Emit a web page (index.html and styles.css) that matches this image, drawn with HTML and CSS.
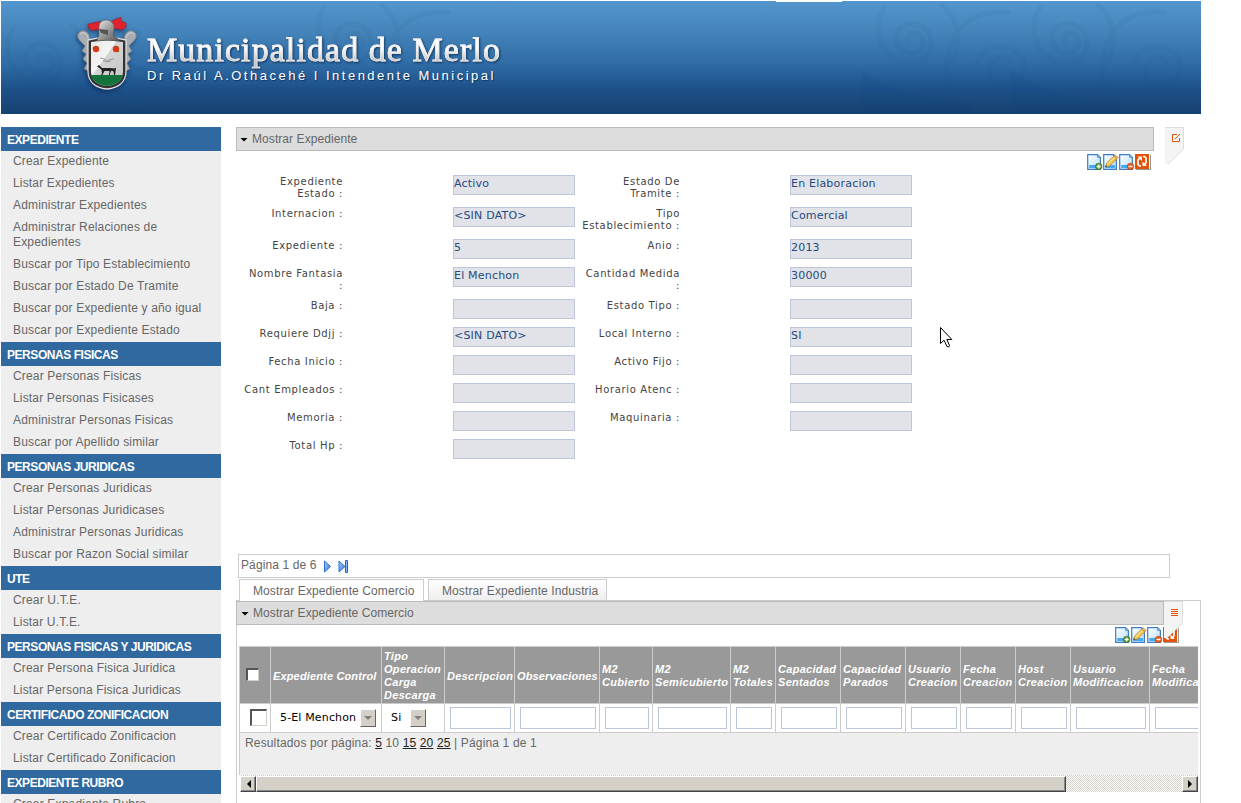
FILE: index.html
```
<!DOCTYPE html>
<html lang="es">
<head>
<meta charset="utf-8">
<title>Municipalidad de Merlo</title>
<link rel="stylesheet" href="styles.css">
</head>
<body>
<svg class="defs" width="0" height="0">
  <defs>
    <linearGradient id="page" x1="0" y1="0" x2="1" y2="1"><stop offset="0" stop-color="#fff"/><stop offset="1" stop-color="#b9dcf8"/></linearGradient>
    <linearGradient id="metal" x1="0" y1="0" x2="1" y2="1"><stop offset="0" stop-color="#eee"/><stop offset=".5" stop-color="#999"/><stop offset="1" stop-color="#555"/></linearGradient>
    <linearGradient id="shield" x1="0" y1="0" x2="1" y2="1"><stop offset="0" stop-color="#e8e8e8"/><stop offset=".4" stop-color="#f4f4f4"/><stop offset=".41" stop-color="#d4d4d4"/><stop offset="1" stop-color="#c4c4c4"/></linearGradient>
    <linearGradient id="play" x1="0" y1="0" x2="1" y2="1"><stop offset="0" stop-color="#a9d0ff"/><stop offset="1" stop-color="#2f74dc"/></linearGradient>
    <symbol id="doc" viewBox="0 0 16 16">
      <path d="M.7 .7h9.800L13.400 3.600V15.300H.7z" fill="url(#page)" stroke="#3c7cc4" stroke-width="1.200"/>
      <path d="M10.500 .6v3h3z" fill="#8dbdeb" stroke="#3c7cc4" stroke-width=".6"/>
      <path d="M2.200 11h9.800v3H2.200z" fill="#49a9ee"/>
    </symbol>
    <symbol id="add" viewBox="0 0 16 16"><use href="#doc"/><circle cx="11.700" cy="12.500" r="3.300" fill="#4f9433" stroke="#356b23" stroke-width=".6"/><path d="M11.700 10.500v4M9.700 12.500h4" stroke="#fff" stroke-width="1.300"/></symbol>
    <symbol id="edit" viewBox="0 0 16 16"><use href="#doc"/><path d="M2.500 13l1.200-4L10.800 2l3.200 2.800L6.500 12z" fill="#f5c84c" stroke="#a77a25" stroke-width=".7"/><path d="M4.700 10l7-7" stroke="#fff0a8"/><path d="M10.800 2l1.500-1.300 3.100 2.700-1.400 1.400z" fill="#e8b088" stroke="#a77a25" stroke-width=".5"/><path d="M2.500 13l.5-1.700 1.300 1z" fill="#333"/></symbol>
    <symbol id="del" viewBox="0 0 16 16"><use href="#doc"/><circle cx="11.500" cy="12.500" r="3.300" fill="#e8601c" stroke="#a73b0a" stroke-width=".6"/><path d="M9.500 12.500h4" stroke="#fff" stroke-width="1.400"/></symbol>
    <symbol id="sync" viewBox="0 0 16 16"><path d="M1 15.500h14.500V1" fill="none" stroke="#999"/><path d="M0 0h14v15H0z" fill="#e35205"/><path d="M6 12H4.500L3 10.500V6l2-2M8 2.500h1.500L11 4v4.500l-1.500 2" fill="none" stroke="#fff" stroke-width="1.700"/><path d="M2.500 2.500H7V7zM7.500 7.500V12H12z" fill="#fff"/></symbol>
  </defs>
</svg>

<header class="banner">
  <svg class="swirls" width="1200" height="113" fill="none" stroke="#1d527f">
    <g id="curl" stroke-opacity=".07" stroke-width="5">
      <path d="M908 42c-5-9 8-14 13-5 5 11-9 20-20 12-14-11-3-30 15-26 20 6 18 36-3 39-32 4-46-36-28-58M940 3c22 18 18 45 10 60M1010 12c-54-8-74 38-60 82M1010 63c-5-12-22-7-22 8 1 19 32 18 35-3 3-25-39-32-47-5"/>
    </g>
    <use href="#curl" x="156"/>
    <use href="#curl" x="-560"/>
    <use href="#curl" x="-870" y="20"/>
    <path d="M860 68q35 30 110 34v10H860zM1010 68q35 30 110 34v10h-110z" fill="#0c467d" fill-opacity=".08" stroke="none"/>
  </svg>
  <span class="notch"></span>
  <svg class="crest" width="64" height="78" viewBox="0 0 64 78">
    <g fill="#a9adb2" stroke="#777c82" stroke-width=".8">
      <path d="M14 22C13 12 4 12 2 17c-2 5 5 9 7 12l-3 5 4 3-3 5 4 4-3 6 5 2z"/>
      <path d="M48 22c1-10 10-10 12-5 2 5-5 9-7 12l3 5-4 3 3 5-4 4 3 6-5 2z"/>
      <path d="M4 17c4-3 7 0 8 4M58 17c-4-3-7 0-8 4" stroke="#ddd" fill="none"/>
    </g>
    <path d="M12 23q19-5 38 0v31c0 12-9 17-19 18-10-1-19-6-19-18z" fill="#333" stroke="#ddd" stroke-width="1.300"/>
    <path d="M15 25q16-3 32 0v29c0 10-7 14-16 15-9-1-16-5-16-15z" fill="url(#shield)"/>
    <path d="M15 58h32c-2 7-8 10-16 11-8-1-14-4-16-11z" fill="#13733b"/>
    <g fill="#dc3719"><circle cx="20" cy="32" r="3.200"/><circle cx="40" cy="32" r="3.200"/></g>
    <path d="M16.500 31h2M41 34.500h2M20 29v1.500M40 29v1.500" stroke="#3f792c"/>
    <path d="M24 41q4 0 7 3 3-2 7-2M27 43.500l4 1.500 4-1" fill="none" stroke="#888" stroke-width=".8"/>
    <path d="M21 49.500l2-1.500 3 3h8.500l4 .5 1.500-1-.5 4.500-.5 3h-1l-.5-3.500-2-1-1.500 3v1.500h-1l.5-4h-5l-2 4h-1.500l1-1.500-.5-3.500-2-2z" fill="#222"/>
    <path d="M29 7c-6-5-10 0-17 0 0 5 3 7 6 6 5 0 7 0 11-3zM34 6c4-4 8-4 11-6-1 4 2 5 5 6 1 5-3 8-7 6-4 0-7-1-9-3z" fill="#dc2430" stroke="#a51421" stroke-width=".6"/>
    <path d="M23 19V9q1-6 8-6 7 1 7 8l-1 8q6 2 6 5-12-2-22 0 0-3 2-5z" fill="url(#metal)" stroke="#666" stroke-width=".6"/>
    <path d="M23 12l9 1v5l-7-2z" fill="#555"/>
  </svg>
  <div class="brand">
    <div class="brand-name">Municipalidad de Merlo</div>
    <div class="brand-sub">Dr Raúl A.Othacehé I Intendente Municipal</div>
  </div>
</header>

<div class="layout">
  <nav class="menu">
    <h3>EXPEDIENTE</h3>
    <a>Crear Expediente</a><a>Listar Expedientes</a><a>Administrar Expedientes</a><a>Administrar Relaciones de<br>Expedientes</a><a>Buscar por Tipo Establecimiento</a><a>Buscar por Estado De Tramite</a><a>Buscar por Expediente y año igual</a><a>Buscar por Expediente Estado</a>
    <h3>PERSONAS FISICAS</h3>
    <a>Crear Personas Fisicas</a><a>Listar Personas Fisicases</a><a>Administrar Personas Fisicas</a><a>Buscar por Apellido similar</a>
    <h3>PERSONAS JURIDICAS</h3>
    <a>Crear Personas Juridicas</a><a>Listar Personas Juridicases</a><a>Administrar Personas Juridicas</a><a>Buscar por Razon Social similar</a>
    <h3>UTE</h3>
    <a>Crear U.T.E.</a><a>Listar U.T.E.</a>
    <h3>PERSONAS FISICAS Y JURIDICAS</h3>
    <a>Crear Persona Fisica Juridica</a><a>Listar Persona Fisica Juridicas</a>
    <h3>CERTIFICADO ZONIFICACION</h3>
    <a>Crear Certificado Zonificacion</a><a>Listar Certificado Zonificacion</a>
    <h3>EXPEDIENTE RUBRO</h3>
    <a>Crear Expediente Rubro</a>
  </nav>

  <main class="main">
    <div class="title-row">
      <div class="title-bar"><i class="caret"></i>Mostrar Expediente</div>
      <svg class="tag" width="19" height="37"><path d="M0 0h19v22L3 37H0z" fill="#f4f4f4"/><path d="M0 .5h18.500v21.500L3 37" fill="none" stroke="#ddd"/><path d="M12 7.500H7.500v7h7V11M10 12l5-5" fill="none" stroke="#e35205"/></svg>
    </div>
    <div class="tools tools-top"><svg><use href="#add"/></svg><svg><use href="#edit"/></svg><svg><use href="#del"/></svg><svg><use href="#sync"/></svg></div>

    <div class="form">
      <label>Expediente<br>Estado :</label><output>Activo</output><label>Estado De<br>Tramite :</label><output>En Elaboracion</output>
      <label>Internacion :</label><output>&lt;SIN DATO&gt;</output><label>Tipo<br>Establecimiento :</label><output>Comercial</output>
      <label>Expediente :</label><output>5</output><label>Anio :</label><output>2013</output>
      <label>Nombre Fantasia<br>:</label><output>El Menchon</output><label>Cantidad Medida<br>:</label><output>30000</output>
      <label>Baja :</label><output></output><label>Estado Tipo :</label><output></output>
      <label>Requiere Ddjj :</label><output>&lt;SIN DATO&gt;</output><label>Local Interno :</label><output>SI</output>
      <label>Fecha Inicio :</label><output></output><label>Activo Fijo :</label><output></output>
      <label>Cant Empleados :</label><output></output><label>Horario Atenc :</label><output></output>
      <label>Memoria :</label><output></output><label>Maquinaria :</label><output></output>
      <label>Total Hp :</label><output></output>
    </div>

    <div class="pager"><span>Página 1 de 6</span>
      <svg width="9" height="13"><path d="M1.500 1l6 5.500-6 5.500z" fill="url(#play)" stroke="#2d6fd3"/></svg>
      <svg width="11" height="13"><path d="M1 1l6 5.500L1 12z" fill="url(#play)" stroke="#2d6fd3"/><path d="M7.500 .5h2v12h-2z" fill="#8fbdf6" stroke="#1f60ce"/></svg>
    </div>
    <div class="tabs"><div class="tab active">Mostrar Expediente Comercio</div><div class="tab">Mostrar Expediente Industria</div></div>

    <section class="panel">
      <div class="title-bar sub"><i class="caret"></i>Mostrar Expediente Comercio</div>
      <div class="tools tools-sub"><svg><use href="#add"/></svg><svg><use href="#edit"/></svg><svg><use href="#del"/></svg><svg><use href="#sync"/></svg></div>
      <svg class="tag over" width="19" height="37"><path d="M0 0h19v22L3 37H0z" fill="#f4f4f4"/><path d="M0 .5h18.500v21.500L3 37" fill="none" stroke="#ddd"/><path d="M7 8.500h7M7 10.500h7M7 12.500h7M7 14.500h7" stroke="#e35205"/></svg>
      <div class="grid-wrap">
        <div class="grid head">
          <div><b class="check small"></b></div><div>Expediente Control</div><div>Tipo<br>Operacion<br>Carga<br>Descarga</div><div>Descripcion</div><div class="tight">Observaciones</div><div>M2<br>Cubierto</div><div>M2<br>Semicubierto</div><div>M2<br>Totales</div><div>Capacidad<br>Sentados</div><div>Capacidad<br>Parados</div><div>Usuario<br>Creacion</div><div>Fecha<br>Creacion</div><div>Host<br>Creacion</div><div>Usuario<br>Modificacion</div><div>Fecha<br>Modificacion</div>
        </div>
        <div class="grid row">
          <div><b class="check"></b></div><div class="pick">5-El Menchon<i class="drop"></i></div><div class="pick">Si<i class="drop"></i></div><div><input></div><div><input></div><div><input></div><div><input></div><div><input></div><div><input></div><div><input></div><div><input></div><div><input></div><div><input></div><div><input></div><div><input></div>
        </div>
        <div class="results">Resultados por página: <u>5</u> 10 <u>15</u> <u>20</u> <u>25</u> | Página 1 de 1</div>
        <div class="scroll"><i class="btn"><svg width="5" height="8"><path d="M5 0v8L1 4z"/></svg></i><i class="thumb"></i><i class="btn end"><svg width="5" height="8"><path d="M0 0v8l4-4z"/></svg></i></div>
      </div>
    </section>
  </main>
</div>
<svg class="cursor" width="13" height="22"><path d="M.5 .5v16l3.500-3.300 3 6.300q2 1.500 2.500-1l-2.700-6h5z" fill="#fff" stroke="#000"/></svg>
</body>
</html>
```
FILE: styles.css
```
* { box-sizing: border-box; }
body {
  margin: 0;
  padding: 1px 0 0 1px;
  width: 1241px;
  height: 803px;
  overflow: hidden;
  position: relative;
  background: #fff;
  color: #666;
  font: 12px/15px "Liberation Sans", Arial, sans-serif;
}
svg { display: block; flex: none; }
i { font-style: normal; }
.defs { position: absolute; }

.banner {
  position: relative;
  width: 1200px;
  height: 113px;
  display: flex;
  padding-left: 75px;
  background: linear-gradient(#5396cd, #4282b8 30%, #2f6ba5 56%, #1d5089 78%, #15416f);
}
.swirls { position: absolute; left: 0; top: 0; }
.notch { position: absolute; left: 775px; top: -1px; width: 66px; height: 2px; background: #fff; }
.crest { position: relative; margin-top: 16px; filter: drop-shadow(-1px 2px 2px rgba(0,20,60,.5)); }
.brand { position: relative; padding: 31px 0 0 7px; white-space: nowrap; }
.brand-name {
  font: 34px/36px "Liberation Serif", serif;
  letter-spacing: 1.07px;
  background: linear-gradient(#fff 45%, #c4c4c4 80%);
  -webkit-background-clip: text;
  background-clip: text;
  color: transparent;
  -webkit-text-stroke: .8px rgba(235,235,235,.85);
  filter: drop-shadow(1px 1px 1px rgba(0,20,50,.6));
}
.brand-sub { color: #fff; font-size: 13px; line-height: 16px; letter-spacing: 2.5px; text-shadow: 1px 1px 1px rgba(0,20,50,.5); }

.layout { display: flex; margin-top: 13px; }
.menu { width: 220px; height: 676px; overflow: hidden; background: #eee; flex: none; }
.menu h3 { margin: 0; height: 24px; padding: 1px 0 0 6px; background: #30699f; color: #fff; font-size: 12px; line-height: 24px; letter-spacing: -.45px; white-space: nowrap; }
.menu a { display: block; padding: 3px 0 4px 12px; letter-spacing: .17px; white-space: nowrap; }

.main { width: 965px; margin-left: 14px; padding-left: 1px; }
.title-row { display: flex; height: 26px; gap: 11px; }
.title-bar { width: 918px; height: 24px; display: flex; align-items: center; gap: 4px; padding: 1px 0 0 3px; background: #ddd; border: 1px solid #bbb; letter-spacing: .07px; }
.caret { width: 8px; height: 4px; background: #000; clip-path: polygon(0 0, 100% 0, 50% 100%); }
.tools { display: flex; height: 16px; }
.tools svg { width: 16px; height: 16px; }
.tools-top { margin: 1px 0 0 851px; }

.form {
  display: grid;
  grid-template-columns: 107px 232px 105px 232px;
  justify-content: start;
  padding-top: 5px;
  height: 384px;
  align-content: start;
}
.form label { text-align: right; font: 10px/12px "DejaVu Sans", Verdana, sans-serif; color: #444; letter-spacing: .65px; padding: 1px 0 7px; white-space: nowrap; }
.form output { width: 122px; height: 20px; margin: 0 0 8px 110px; border: 1px solid #bcc5dc; background: #e2e3e8; color: #234a82; font: 11px/15px "DejaVu Sans", Verdana, sans-serif; letter-spacing: .2px; white-space: nowrap; }

.pager { width: 932px; height: 24px; margin-left: 2px; display: flex; padding: 3px 2px; border: 1px solid #ccc; letter-spacing: .12px; }
.pager svg { margin: 2px 0 0 6px; }
.tabs { display: flex; gap: 4px; margin: 1px 0 0 3px; height: 21px; }
.tab { width: 179px; height: 21px; padding: 4px 0 0 13px; border: 1px solid #ccc; border-bottom: 0; background: linear-gradient(#fff, #eee); letter-spacing: .1px; white-space: nowrap; }
.tab.active { width: 185px; height: 22px; background: #fff; position: relative; z-index: 1; }
.panel { position: relative; width: 965px; height: 210px; border: 1px solid #ccc; border-bottom: 0; }
.title-bar.sub { width: 928px; margin-left: -1px; padding-left: 4px; }
.tools-sub { margin: 2px 0 0 878px; }
.tag.over { position: absolute; left: 927px; top: 0; }
.grid-wrap { width: 959px; margin: 3px 0 0 2px; overflow: hidden; border-top: 1px solid #ccc; }
.grid { display: grid; width: 990px; grid-template-columns: 31px 111px 63px 70px 85px 53px 78px 45px 65px 65px 55px 55px 55px 79px 80px; }
.grid > div { border-left: 1px solid #ccc; border-bottom: 1px solid #ccc; display: flex; align-items: center; }
.head > div { height: 57px; padding: 2px 0 0 2px; background: #999; color: #fff; font-weight: bold; font-style: italic; font-size: 11px; line-height: 13px; letter-spacing: .3px; white-space: nowrap; }
.head > div.tight, .head > div:nth-child(2) { letter-spacing: .15px; }
.row > div { height: 29px; padding-left: 5px; }
.row input { width: calc(100% - 3px); height: 22px; border: 1px solid #bcc5dc; background: #fff; padding: 0; }
.check { width: 17px; height: 17px; margin: -1px 0 0 5px; border: 1px solid #d4d0c8; border-top: 2px solid #555; border-left: 2px solid #555; background: #fff; }
.check.small { width: 13px; height: 13px; margin-left: 4px; margin-top: -3px; }
.row .pick { color: #000; font: 11px/14px "DejaVu Sans", Verdana, sans-serif; letter-spacing: .15px; padding-left: 9px; justify-content: space-between; padding-right: 5px; white-space: nowrap; }
.row .pick + .pick { padding-right: 18px; }
.drop { width: 16px; height: 18px; border: 1px solid #fff; border-right-color: #666; border-bottom-color: #666; background: #d4d0c8; display: flex; align-items: center; justify-content: center; }
.drop::before { content: ""; width: 8px; height: 4px; background: #808080; clip-path: polygon(0 0, 100% 0, 50% 100%); }
.results { height: 42px; padding: 3px 0 0 5px; background: #eee; border-left: 1px solid #ccc; letter-spacing: .15px; }
.results u { color: #222; }
.scroll { display: flex; height: 17px; margin-left: 1px; background: repeating-conic-gradient(#d4d0c8 0 25%, #fff 0 50%) 0 0 / 2px 2px; }
.btn, .thumb { height: 16px; margin-top: 1px; background: #d4d0c8; border: 1px solid #fff; border-right-color: #444; border-bottom-color: #444; box-shadow: inset -1px -1px #888; }
.btn { width: 16px; display: flex; align-items: center; justify-content: center; }
.thumb { width: 810px; }
.btn.end { margin-left: auto; }
.cursor { position: absolute; left: 940px; top: 327px; }
```
